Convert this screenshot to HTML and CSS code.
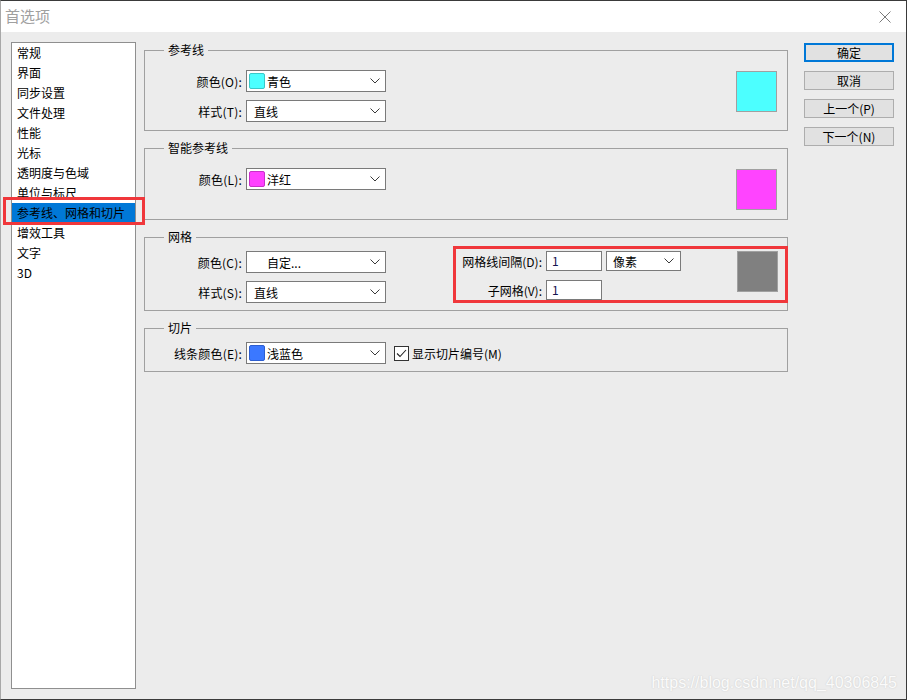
FILE: index.html
```html
<!DOCTYPE html>
<html lang="zh-CN">
<head>
<meta charset="utf-8">
<title>首选项</title>
<link rel="stylesheet" href="styles.css">
</head>
<body>
<div class="window">
  <div class="titlebar">
    <span class="title">首选项</span>
    <svg class="close" width="12" height="12" viewBox="0 0 12 12"><path d="M0.5 0.5 L11.5 11.5 M11.5 0.5 L0.5 11.5" stroke="#7a7a7a" stroke-width="1" fill="none"/></svg>
  </div>
  <div class="content">
    <ul class="nav">
      <li>常规</li>
      <li>界面</li>
      <li>同步设置</li>
      <li>文件处理</li>
      <li>性能</li>
      <li>光标</li>
      <li>透明度与色域</li>
      <li>单位与标尺</li>
      <li class="selected">参考线、网格和切片</li>
      <li>增效工具</li>
      <li>文字</li>
      <li>3D</li>
    </ul>

    <div class="main">
      <fieldset class="group g1">
        <legend>参考线</legend>
        <div class="gbody">
          <div class="rows">
            <div class="row"><span class="lbl">颜色(O):</span>
              <div class="combo"><span class="chip cyan"></span><span class="ctext">青色</span>
                <svg class="chev" width="10" height="6" viewBox="0 0 10 6"><path d="M0.5 0.5 L5 5 L9.5 0.5" stroke="#3a3a3a" fill="none"/></svg></div></div>
            <div class="row"><span class="lbl">样式(T):</span>
              <div class="combo"><span class="ctext plain">直线</span>
                <svg class="chev" width="10" height="6" viewBox="0 0 10 6"><path d="M0.5 0.5 L5 5 L9.5 0.5" stroke="#3a3a3a" fill="none"/></svg></div></div>
          </div>
          <div class="swatch cyan"></div>
        </div>
      </fieldset>

      <fieldset class="group g2">
        <legend>智能参考线</legend>
        <div class="gbody">
          <div class="rows">
            <div class="row"><span class="lbl">颜色(L):</span>
              <div class="combo"><span class="chip magenta"></span><span class="ctext">洋红</span>
                <svg class="chev" width="10" height="6" viewBox="0 0 10 6"><path d="M0.5 0.5 L5 5 L9.5 0.5" stroke="#3a3a3a" fill="none"/></svg></div></div>
          </div>
          <div class="swatch magenta"></div>
        </div>
      </fieldset>

      <fieldset class="group g3">
        <legend>网格</legend>
        <div class="gbody">
          <div class="rows left">
            <div class="row"><span class="lbl">颜色(C):</span>
              <div class="combo"><span class="chip empty"></span><span class="ctext">自定...</span>
                <svg class="chev" width="10" height="6" viewBox="0 0 10 6"><path d="M0.5 0.5 L5 5 L9.5 0.5" stroke="#3a3a3a" fill="none"/></svg></div></div>
            <div class="row"><span class="lbl">样式(S):</span>
              <div class="combo"><span class="ctext plain">直线</span>
                <svg class="chev" width="10" height="6" viewBox="0 0 10 6"><path d="M0.5 0.5 L5 5 L9.5 0.5" stroke="#3a3a3a" fill="none"/></svg></div></div>
          </div>
          <div class="hl">
            <div class="spacing">
              <span class="slbl">网格线间隔(D):</span>
              <div class="field">1</div>
              <div class="select"><span>像素</span>
                <svg class="chev" width="10" height="6" viewBox="0 0 10 6"><path d="M0.5 0.5 L5 5 L9.5 0.5" stroke="#3a3a3a" fill="none"/></svg></div>
              <span class="slbl">子网格(V):</span>
              <div class="field">1</div>
            </div>
            <div class="swatch gray"></div>
          </div>
        </div>
      </fieldset>

      <fieldset class="group g4">
        <legend>切片</legend>
        <div class="gbody">
          <div class="row"><span class="lbl">线条颜色(E):</span>
            <div class="combo"><span class="chip blue"></span><span class="ctext">浅蓝色</span>
              <svg class="chev" width="10" height="6" viewBox="0 0 10 6"><path d="M0.5 0.5 L5 5 L9.5 0.5" stroke="#3a3a3a" fill="none"/></svg></div>
            <span class="check"><svg width="13" height="13" viewBox="0 0 13 13"><path d="M2 6.5 L5 9.5 L11 3" stroke="#222" stroke-width="1.1" fill="none"/></svg></span>
            <span class="checklbl">显示切片编号(M)</span>
          </div>
        </div>
      </fieldset>
    </div>

    <div class="buttons">
      <div class="btn default">确定</div>
      <div class="btn">取消</div>
      <div class="btn">上一个(P)</div>
      <div class="btn">下一个(N)</div>
    </div>
  </div>
  <div class="watermark">https://blog.csdn.net/qq_40306845</div>
</div>
</body>
</html>
```

FILE: styles.css
```css
* { box-sizing: border-box; }

html, body {
  margin: 0;
  padding: 0;
  background: #ececec;
}

body {
  font-family: "Noto Sans CJK SC", "Noto Sans", sans-serif;
  font-size: 12px;
  color: #000;
}

.window {
  position: relative;
  width: 907px;
  height: 700px;
  border: 1px solid #3a3a3a;
  border-left-color: #a8a8a8;
  background: #ececec;
  display: flex;
  flex-direction: column;
}

.titlebar {
  height: 31px;
  background: #fff;
  display: flex;
  align-items: center;
  padding-left: 4px;
  padding-right: 15px;
  flex: none;
}

.title {
  font-size: 15px;
  color: #a0a0a0;
  line-height: 20px;
  margin-top: -2px;
}

.close {
  margin-left: auto;
  display: block;
}

.content {
  flex: 1;
  display: flex;
  align-items: stretch;
  padding: 10px 12px 10px 10px;
}

/* left category list */
.nav {
  list-style: none;
  margin: 0;
  padding: 0;
  width: 125px;
  flex: none;
  background: #fff;
  border: 1px solid #8f8f8f;
}

.nav li {
  height: 20px;
  line-height: 20px;
  padding-left: 5px;
  white-space: nowrap;
}

.nav li.selected {
  position: relative;
  background: #0078d7;
  color: #000;
}

.nav li.selected::after {
  content: "";
  position: absolute;
  top: -6px;
  bottom: -2px;
  left: -9px;
  right: -10px;
  border: 3px solid #f0373b;
  z-index: 5;
}

/* main column */
.main {
  width: 644px;
  flex: none;
  margin-left: 8px;
  display: flex;
  flex-direction: column;
  gap: 9px;
}

.group {
  margin: 0;
  padding: 0;
  min-width: 0;
  border: 1px solid #a0a0a0;
}

.group legend {
  margin-left: 19px;
  padding: 0 4px;
  line-height: 16px;
  font-size: 12px;
}

.gbody {
  display: flex;
  align-items: flex-start;
}

.g1 .gbody { padding: 12px 10px 8px 0; }
.g2 .gbody { padding: 12px 10px 9px 0; }
.g3 .gbody { padding: 1px 0 7px 0; }
.g4 .gbody { padding: 6px 0 7px 0; }

.rows {
  display: flex;
  flex-direction: column;
  gap: 8px;
}

.rows.left { margin-top: 5px; }

.row {
  display: flex;
  align-items: center;
  height: 22px;
}

.lbl {
  width: 97px;
  text-align: right;
  margin-right: 4px;
  white-space: nowrap;
  letter-spacing: 0.2px;
}

.combo {
  width: 140px;
  height: 22px;
  border: 1px solid #7a7a7a;
  background: #fff;
  display: flex;
  align-items: center;
  padding-left: 2px;
}

.chip {
  width: 16px;
  height: 16px;
  border-radius: 2px;
  margin-right: 2px;
  flex: none;
}

.chip.cyan { background: #4cffff; border: 1px solid #3ac8c8; }
.chip.magenta { background: #ff40ff; border: 1px solid #c830c8; }
.chip.blue { background: #3b78ff; border: 1px solid #2d5ed0; }
.chip.empty { background: transparent; }

.ctext.plain { padding-left: 5px; }

.chev {
  margin-left: auto;
  margin-right: 5px;
  display: block;
  flex: none;
}

.swatch {
  width: 41px;
  height: 41px;
  border: 1px solid #a0a0a0;
  margin-left: auto;
  margin-top: 1px;
  flex: none;
}

.swatch.cyan { background: #4cffff; }
.swatch.magenta { background: #ff44ff; }
.swatch.gray { background: #808080; margin-top: 0; margin-right: 7px; }

/* grid spacing block with annotation frame */
.hl {
  flex: 1;
  margin-left: 67px;
  margin-right: -1px;
  border: 3px solid #f0373b;
  padding: 2px 0 0 2px;
  display: flex;
  align-items: flex-start;
  position: relative;
  z-index: 2;
}

.spacing {
  display: grid;
  grid-template-columns: 84px 56px 75px;
  column-gap: 4px;
  row-gap: 9px;
  align-items: center;
}

.slbl {
  text-align: right;
  white-space: nowrap;
}

.field {
  height: 20px;
  border: 1px solid #7a7a7a;
  background: #fff;
  padding-left: 5px;
  line-height: 18px;
  color: #141450;
}

.select {
  height: 20px;
  border: 1px solid #7a7a7a;
  background: #fff;
  display: flex;
  align-items: center;
  padding-left: 6px;
}

.select .chev { margin-right: 6px; }

.check {
  width: 15px;
  height: 15px;
  border: 1px solid #333;
  background: #fff;
  margin-left: 8px;
  display: flex;
  align-items: center;
  justify-content: center;
}

.check svg { display: block; }

.checklbl {
  margin-left: 3px;
  white-space: nowrap;
}

/* buttons */
.buttons {
  width: 90px;
  flex: none;
  margin-left: 16px;
  padding-top: 1px;
  display: flex;
  flex-direction: column;
  gap: 9px;
}

.btn {
  height: 19px;
  border: 1px solid #adadad;
  background: #e1e1e1;
  display: flex;
  align-items: center;
  justify-content: center;
  line-height: 16px;
}

.btn.default {
  border: 2px solid #0078d7;
}

.watermark {
  position: absolute;
  right: 9px;
  bottom: 7px;
  font-family: "Liberation Sans", Arial, sans-serif;
  font-size: 16px;
  color: #fbfbfb;
  text-shadow: 0 0 1.5px #c4c4c4;
  white-space: nowrap;
}
```
